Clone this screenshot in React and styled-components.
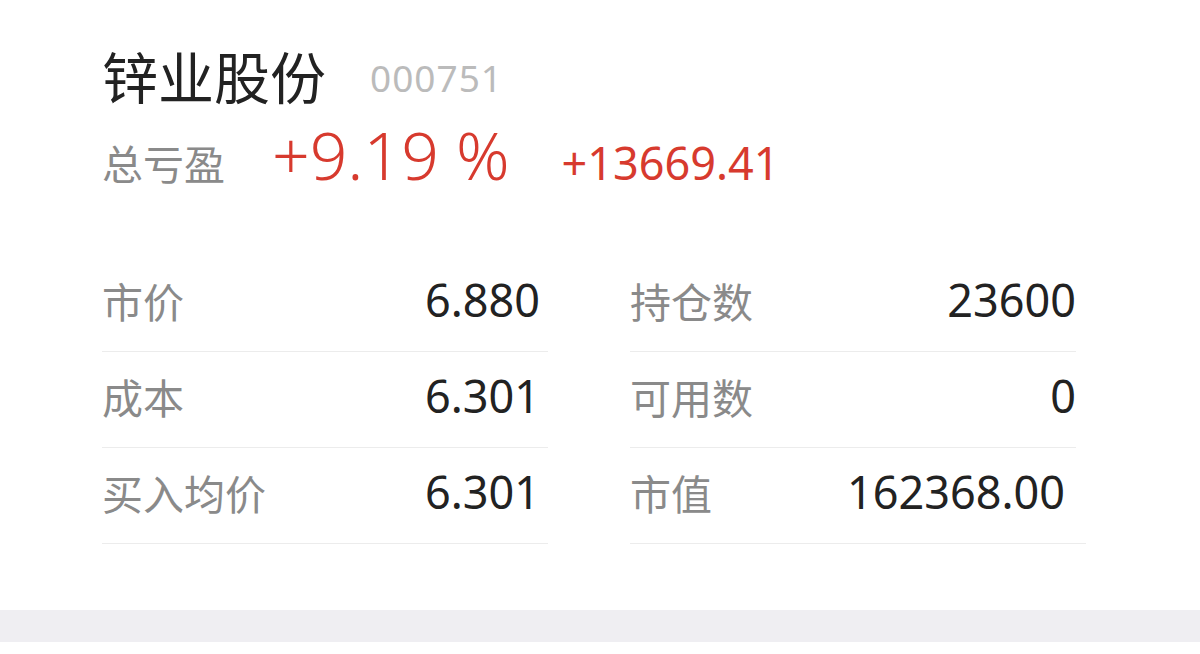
import React from 'react';
import styled, { createGlobalStyle } from 'styled-components';

const GlobalStyle = createGlobalStyle`
  body {
    margin: 0;
    background: #fff;
    font-family: "Noto Sans", "Noto Sans CJK SC", sans-serif;
  }
`;

const Card = styled.div`
  background: #fff;
  padding: 37px 0 0 102px;
  height: 570px;
  box-sizing: border-box;
`;

const TitleRow = styled.div`
  display: flex;
  align-items: center;
  gap: 44px;
  height: 76px;
  margin-bottom: -4px;
`;

const Name = styled.span`
  font-size: 56px;
  line-height: 76px;
  color: #222;
  font-family: "Noto Sans CJK SC", sans-serif;
`;

const Code = styled.span`
  font-size: 37px;
  line-height: 1;
  color: #bbb;
  letter-spacing: 1px;
  padding-top: 4px;
`;

const ProfitRow = styled.div`
  display: flex;
  align-items: baseline;
  height: 98px;
`;

const ProfitLabel = styled.span`
  font-size: 41px;
  color: #8a8a8a;
  font-family: "Noto Sans CJK SC", sans-serif;
  width: 170px;
`;

const Red = styled.span`
  color: #d73a2e;
  font-size: ${p => p.size}px;
  margin-right: ${p => p.gap || 0}px;
  font-weight: ${p => p.weight || 400};
`;

const Grid = styled.div`
  display: grid;
  grid-template-columns: 446px 446px;
  column-gap: 82px;
  margin-top: 49px;
`;

const Cell = styled.div`
  display: flex;
  align-items: center;
  justify-content: space-between;
  height: 96px;
  box-sizing: border-box;
  padding-bottom: 8px;
  border-bottom: 1px solid #ececec;
  margin-right: ${p => p.extend ? -10 : 0}px;
  padding-right: ${p => p.pad}px;
`;

const Label = styled.span`
  font-size: 41px;
  color: #8a8a8a;
  font-family: "Noto Sans CJK SC", sans-serif;
`;

const Value = styled.span`
  font-size: 45px;
  color: #222;
`;

const Band = styled.div`
  height: 32px;
  background: #efeef2;
  margin-top: 40px;
`;

const rows = [
  ['市价', '6.880', '持仓数', '23600'],
  ['成本', '6.301', '可用数', '0'],
  ['买入均价', '6.301', '市值', '162368.00'],
];

export default function App() {
  return (
    <>
      <GlobalStyle />
      <Card>
        <TitleRow>
          <Name>锌业股份</Name>
          <Code>000751</Code>
        </TitleRow>
        <ProfitRow>
          <ProfitLabel>总亏盈</ProfitLabel>
          <Red size={66} gap={52} weight={300}>+9.19 %</Red>
          <Red size={45}>+13669.41</Red>
        </ProfitRow>
        <Grid>
          {rows.map((r, i) => (
            <React.Fragment key={i}>
              <Cell pad={8}>
                <Label>{r[0]}</Label>
                <Value>{r[1]}</Value>
              </Cell>
              <Cell extend={i === 2} pad={i === 2 ? 21 : 0}>
                <Label>{r[2]}</Label>
                <Value>{r[3]}</Value>
              </Cell>
            </React.Fragment>
          ))}
        </Grid>
      </Card>
      <Band />
    </>
  );
}
